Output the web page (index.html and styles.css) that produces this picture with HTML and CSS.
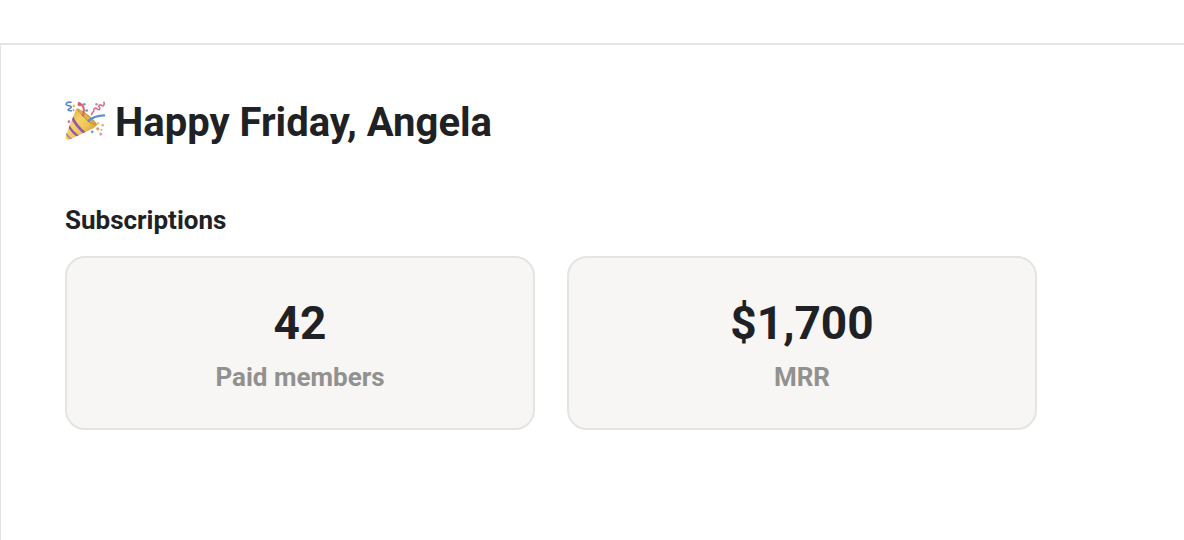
FILE: index.html
```html
<!DOCTYPE html>
<html lang="en">
<head>
  <meta charset="UTF-8">
  <title>Dashboard</title>
  <meta name="viewport" content="width=device-width, initial-scale=1.0">
  <link rel="stylesheet" href="styles.css">
</head>
<body>

  <main class="panel">
    <h1 class="greeting">
      <svg class="greeting-icon" viewBox="26 32 122 122" aria-hidden="true">
        <defs>
          <linearGradient id="gold" x1="0" y1="0" x2="1" y2="1">
            <stop offset="0" stop-color="#d99c33"/>
            <stop offset="0.4" stop-color="#f6d365"/>
            <stop offset="0.6" stop-color="#efc355"/>
            <stop offset="1" stop-color="#a8762a"/>
          </linearGradient>
          <clipPath id="cone">
            <path d="M61 54 C75 59 112 84 124 104 C123 108 119 111 114 114 L42 149 C34 153 25 148 28 138 Z"/>
          </clipPath>
        </defs>
        <!-- cone -->
        <g clip-path="url(#cone)">
          <rect x="24" y="50" width="104" height="106" fill="url(#gold)"/>
          <path d="M46 78 C54 98 68 115 87 131" fill="none" stroke="#8f55b8" stroke-width="8"/>
          <path d="M36 105 C44 121 55 133 70 141" fill="none" stroke="#8f55b8" stroke-width="7"/>
          <path d="M28 128 C33 138 40 146 48 150" fill="none" stroke="#a77bb5" stroke-width="5"/>
        </g>
        <path d="M61 54 C78 58 112 83 124 104 C116 109 104 102 90 89 C76 76 65 62 61 54 Z" fill="#cb9633"/>
        <path d="M67 59 C82 64 107 85 117 101 C108 102 81 83 67 59 Z" fill="#dcb347"/>
        <!-- streamers -->
        <g fill="none" stroke-linecap="round">
          <path d="M81 77 C86 59 83 43 69 38 C65 42 67 46 73 45" stroke="#dc6070" stroke-width="6"/>
          <path d="M98 93 C108 82 126 77 146 76" stroke="#608fd3" stroke-width="7"/>
          <path d="M44 36 C36 34 28 37 30 43 C33 48 43 45 45 50 C46 55 36 54 35 59 C36 63 42 61 45 62" stroke="#5b84cc" stroke-width="5"/>
          <path d="M145 36 C147 45 142 49 137 45 C132 42 127 45 131 51 C134 57 130 61 125 57 C119 52 113 53 114 60 C116 66 107 65 107 74" stroke="#d9708a" stroke-width="5"/>
        </g>
        <!-- confetti -->
        <circle cx="85" cy="42" r="4" fill="#7596d0"/>
        <circle cx="92" cy="61" r="4" fill="#6288cc"/>
        <circle cx="122" cy="42" r="4" fill="#db7f9d"/>
        <circle cx="53" cy="47" r="4" fill="#dfc657"/>
        <circle cx="52" cy="60" r="3" fill="#a583c7"/>
        <circle cx="38" cy="95" r="4" fill="#d27585"/>
        <circle cx="126" cy="100" r="4" fill="#e5c654"/>
        <circle cx="141" cy="106" r="4" fill="#e8ab7e"/>
        <circle cx="126" cy="117" r="5" fill="#dd9a60"/>
        <circle cx="109" cy="126" r="4" fill="#6f92cc"/>
        <circle cx="135" cy="133" r="5" fill="#e8a0ac"/>
        <circle cx="137" cy="120" r="3" fill="#c79ccb"/>
      </svg>
      Happy Friday, Angela
    </h1>

    <section class="stats">
      <h2 class="stats-title">Subscriptions</h2>
      <div class="stats-grid">
        <div class="card">
          <div class="card-value">42</div>
          <div class="card-label">Paid members</div>
        </div>
        <div class="card">
          <div class="card-value">$1,700</div>
          <div class="card-label">MRR</div>
        </div>
      </div>
    </section>
  </main>

</body>
</html>
```
FILE: styles.css
```css
* {
  box-sizing: border-box;
}

body {
  margin: 0;
  min-height: 100vh;
  display: flex;
  flex-direction: column;
  padding-top: 43px;
  background-color: #fff;
  color: #202124;
  font-family: Roboto, sans-serif;
}

.panel {
  flex: 1;
  padding: 52px 64px;
  border-top: 2px solid #e3e3e3;
  border-left: 1px solid #e3e3e3;
}

.greeting {
  display: flex;
  align-items: center;
  gap: 10px;
  margin: 0 0 54px;
  font-size: 40px;
  line-height: 52px;
  font-weight: 700;
}

.greeting-icon {
  width: 40px;
  height: 40px;
  margin-bottom: 4px;
}

.stats {
  max-width: 972px;
}

.stats-title {
  margin: 0 0 19px;
  font-size: 26px;
  line-height: 34px;
  font-weight: 700;
}

.stats-grid {
  display: grid;
  grid-template-columns: 1fr 1fr;
  gap: 32px;
}

.card {
  padding: 36px 32px 30px;
  background-color: #f7f6f4;
  border: 2px solid #e4e4e3;
  border-radius: 20px;
  text-align: center;
}

.card-value {
  margin-bottom: 4px;
  font-size: 46px;
  line-height: 58px;
  font-weight: 700;
}

.card-label {
  color: #91918f;
  font-size: 26px;
  line-height: 42px;
  font-weight: 700;
}
```
